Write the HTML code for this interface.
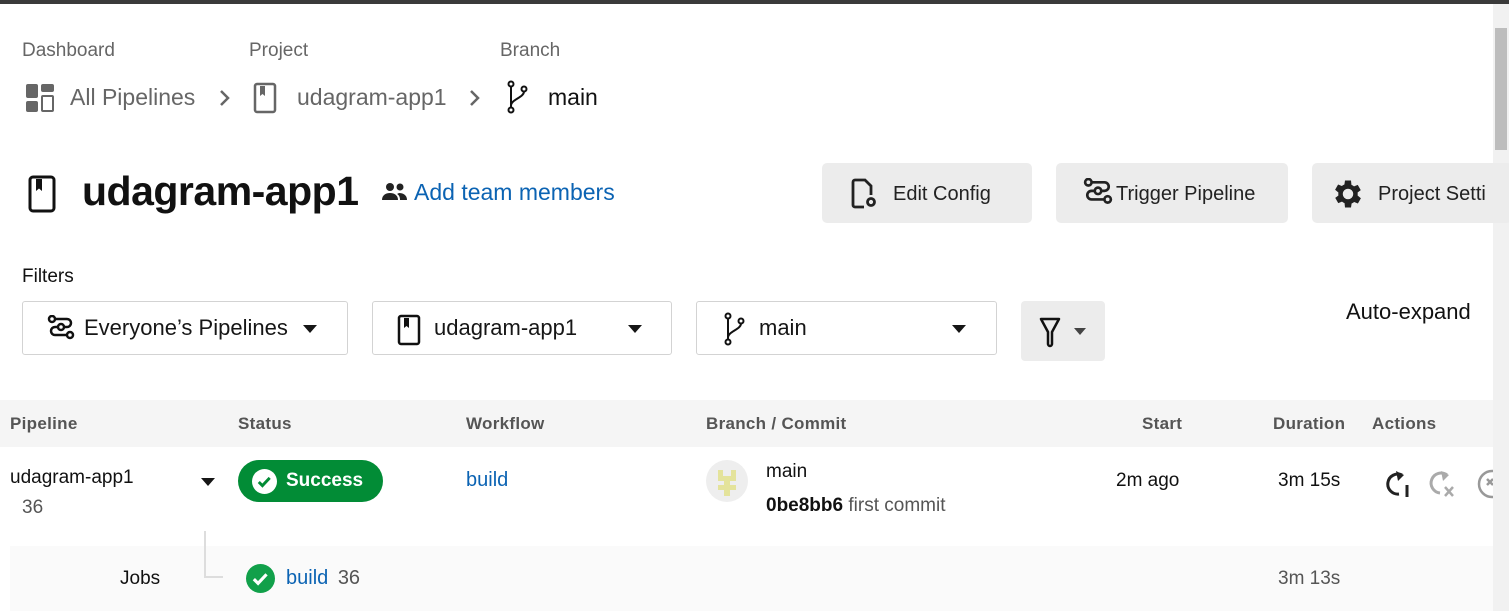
<!DOCTYPE html>
<html><head><style>
*{margin:0;padding:0;box-sizing:border-box}
body{width:1509px;height:611px;overflow:hidden;background:#fff;font-family:"Liberation Sans",sans-serif;color:#161616;position:relative}
.a{position:absolute;white-space:nowrap}
.btn{position:absolute;top:163px;height:60px;background:#ececec;border-radius:5px;font-size:20px;color:#222}
.sel{position:absolute;top:301px;height:54px;border:1px solid #d3d3d3;border-radius:3px;font-size:22px}
.tri{position:absolute;width:0;height:0;border-left:7px solid transparent;border-right:7px solid transparent;border-top:8px solid #161616}
.th{position:absolute;top:414px;font-size:17px;font-weight:bold;color:#555;letter-spacing:.3px}
</style></head><body>
<div class="a" style="left:0;top:0;width:1509px;height:4px;background:#3a3a3a"></div>
<div class="a" style="left:1493px;top:4px;width:16px;height:607px;background:#f1f1f1"></div>
<div class="a" style="left:1495px;top:28px;width:12px;height:122px;background:#bdbdbd"></div>

<div class="a" style="left:22px;top:40px;font-size:19px;color:#666">Dashboard</div>
<div class="a" style="left:249px;top:40px;font-size:19px;color:#666">Project</div>
<div class="a" style="left:500px;top:40px;font-size:19px;color:#666">Branch</div>

<svg class="a" style="left:26px;top:84px" width="28" height="28" viewBox="0 0 28 28"><rect x="0" y="0" width="12" height="14" rx="2" fill="#666"/><rect x="15" y="0" width="13" height="8" rx="2" fill="#666"/><rect x="0" y="17" width="12" height="11" rx="2" fill="#666"/><rect x="16" y="12" width="11" height="15" rx="1" fill="none" stroke="#666" stroke-width="2"/></svg>
<div class="a" style="left:70px;top:84px;font-size:23px;color:#666">All Pipelines</div>
<svg class="a" style="left:218px;top:88px" width="14" height="20" viewBox="0 0 14 20"><path d="M3 3l7 7-7 7" fill="none" stroke="#666" stroke-width="2.5"/></svg>
<svg class="a" style="left:253px;top:82px" width="26" height="32" viewBox="0 0 26 32"><rect x="2" y="2" width="20" height="28" rx="2" fill="none" stroke="#666" stroke-width="2.5"/><path d="M7 4v10l2.5-2 2.5 2V4z" fill="#666"/></svg>
<div class="a" style="left:297px;top:84px;font-size:23px;color:#666">udagram-app1</div>
<svg class="a" style="left:468px;top:88px" width="14" height="20" viewBox="0 0 14 20"><path d="M3 3l7 7-7 7" fill="none" stroke="#666" stroke-width="2.5"/></svg>
<svg class="a" style="left:506px;top:80px" width="24" height="34" viewBox="0 0 24 34"><circle cx="5" cy="4" r="2.5" fill="none" stroke="#111" stroke-width="2"/><circle cx="18" cy="9" r="2.5" fill="none" stroke="#111" stroke-width="2"/><circle cx="5" cy="30" r="2.5" fill="none" stroke="#111" stroke-width="2"/><path d="M5 6.5v21M18 11.5c0 6-13 8-13 14" fill="none" stroke="#111" stroke-width="2"/></svg>
<div class="a" style="left:548px;top:84px;font-size:23px;color:#111">main</div>

<svg class="a" style="left:28px;top:175px" width="30" height="38" viewBox="0 0 30 38"><rect x="2" y="2" width="24" height="34" rx="3" fill="none" stroke="#111" stroke-width="3"/><path d="M8 4v12l3-2.5 3 2.5V4z" fill="#111"/></svg>
<div class="a" style="left:82px;top:168px;font-size:41px;font-weight:bold;color:#111;letter-spacing:-.5px">udagram-app1</div>
<svg class="a" style="left:382px;top:182px" width="26" height="20" viewBox="0 0 26 20"><circle cx="8" cy="5" r="4" fill="#222"/><circle cx="18" cy="5" r="3.5" fill="#222"/><path d="M0 18c0-5 4-7 8-7s8 2 8 7zM17 11c4 0 8 2 8 7h-7c0-3-1-5-3-6z" fill="#222"/></svg>
<div class="a" style="left:414px;top:179px;font-size:23px;color:#0b63b3">Add team members</div>

<div class="btn" style="left:822px;width:210px"><svg class="a" style="left:28px;top:15px" width="28" height="32" viewBox="0 0 28 32"><path d="M14 29H5a2 2 0 01-2-2V4a2 2 0 012-2h10l6 6v9" fill="none" stroke="#222" stroke-width="2.8"/><circle cx="21" cy="24" r="3.5" fill="none" stroke="#222" stroke-width="2.8"/></svg><span class="a" style="left:71px;top:20px">Edit Config</span></div>
<div class="btn" style="left:1056px;width:232px"><svg class="a" style="left:27px;top:15px" width="30" height="30" viewBox="0 0 28 28"><path d="M6 4h14a4 4 0 010 8H8a4 4 0 000 8h14" fill="none" stroke="#222" stroke-width="2.5"/><circle cx="5" cy="4" r="3" fill="#ececec" stroke="#222" stroke-width="2.5"/><circle cx="14" cy="12" r="3" fill="#ececec" stroke="#222" stroke-width="2.5"/><circle cx="23" cy="20" r="3" fill="#ececec" stroke="#222" stroke-width="2.5"/></svg><span class="a" style="left:60px;top:20px">Trigger Pipeline</span></div>
<div class="btn" style="left:1312px;width:200px"><svg class="a" style="left:18px;top:13px" width="36" height="36" viewBox="0 0 24 24"><path fill="#222" d="M19.4 13a7.5 7.5 0 000-2l2.1-1.6-2-3.5-2.5 1a7 7 0 00-1.7-1L15 3h-4l-.4 2.7a7 7 0 00-1.7 1l-2.5-1-2 3.5L6.6 11a7.5 7.5 0 000 2l-2.1 1.6 2 3.5 2.5-1a7 7 0 001.7 1L11 21h4l.4-2.7a7 7 0 001.7-1l2.5 1 2-3.5zM13 15.5a3.5 3.5 0 110-7 3.5 3.5 0 010 7z" transform="translate(-1 0)"/></svg><span class="a" style="left:66px;top:20px">Project Setti</span></div>

<div class="a" style="left:22px;top:266px;font-size:19px;color:#111">Filters</div>
<div class="sel" style="left:22px;width:326px"><svg class="a" style="left:24px;top:13px" width="28" height="28" viewBox="0 0 28 28"><path d="M6 4h14a4 4 0 010 8H8a4 4 0 000 8h14" fill="none" stroke="#111" stroke-width="2.5"/><circle cx="5" cy="4" r="3" fill="#fff" stroke="#111" stroke-width="2.5"/><circle cx="14" cy="12" r="3" fill="#fff" stroke="#111" stroke-width="2.5"/><circle cx="23" cy="20" r="3" fill="#fff" stroke="#111" stroke-width="2.5"/></svg><span class="a" style="left:61px;top:13px">Everyone’s Pipelines</span><div class="tri" style="left:280px;top:23px"></div></div>
<div class="sel" style="left:372px;width:300px"><svg class="a" style="left:24px;top:12px" width="26" height="32" viewBox="0 0 26 32"><rect x="2" y="2" width="20" height="28" rx="2" fill="none" stroke="#111" stroke-width="2.5"/><path d="M7 4v10l2.5-2 2.5 2V4z" fill="#111"/></svg><span class="a" style="left:61px;top:13px">udagram-app1</span><div class="tri" style="left:255px;top:23px"></div></div>
<div class="sel" style="left:696px;width:301px"><svg class="a" style="left:26px;top:10px" width="24" height="34" viewBox="0 0 24 34"><circle cx="5" cy="4" r="2.5" fill="none" stroke="#111" stroke-width="2"/><circle cx="18" cy="9" r="2.5" fill="none" stroke="#111" stroke-width="2"/><circle cx="5" cy="30" r="2.5" fill="none" stroke="#111" stroke-width="2"/><path d="M5 6.5v21M18 11.5c0 6-13 8-13 14" fill="none" stroke="#111" stroke-width="2"/></svg><span class="a" style="left:62px;top:13px">main</span><div class="tri" style="left:255px;top:23px"></div></div>
<div class="a" style="left:1021px;top:301px;width:84px;height:60px;background:#ececec;border-radius:4px"><svg class="a" style="left:17px;top:15px" width="24" height="32" viewBox="0 0 24 32"><path d="M3 3h18l-7 13v12a2 2 0 01-4 0V16z" fill="none" stroke="#111" stroke-width="2.5" stroke-linejoin="round"/></svg><div class="tri" style="left:53px;top:27px;border-left-width:6px;border-right-width:6px;border-top-width:7px;border-top-color:#444"></div></div>
<div class="a" style="left:1346px;top:299px;font-size:22px;color:#111">Auto-expand</div>

<div class="a" style="left:0;top:400px;width:1493px;height:47px;background:#f5f5f5"></div>
<div class="th" style="left:10px">Pipeline</div>
<div class="th" style="left:238px">Status</div>
<div class="th" style="left:466px">Workflow</div>
<div class="th" style="left:706px">Branch / Commit</div>
<div class="th" style="left:1142px">Start</div>
<div class="th" style="left:1273px">Duration</div>
<div class="th" style="left:1372px">Actions</div>

<div class="a" style="left:10px;top:467px;font-size:19px;color:#111">udagram-app1</div>
<div class="a" style="left:22px;top:497px;font-size:19px;color:#555">36</div>
<div class="tri" style="left:201px;top:478px"></div>
<div class="a" style="left:238px;top:460px;width:145px;height:42px;background:#028c36;border-radius:21px"><svg class="a" style="left:14px;top:9px" width="25" height="25" viewBox="0 0 24 24"><circle cx="12" cy="12" r="12" fill="#fff"/><path d="M6.5 12.5l3.5 3.5 7-7.5" fill="none" stroke="#028c36" stroke-width="2.8"/></svg><span class="a" style="left:48px;top:10px;font-size:19px;font-weight:bold;color:#fff">Success</span></div>
<div class="a" style="left:466px;top:469px;font-size:20px;color:#0b63b3">build</div>
<svg class="a" style="left:706px;top:460px" width="42" height="42" viewBox="0 0 42 42"><circle cx="21" cy="21" r="21" fill="#eeeeee"/><path d="M12 10h5v6h8v-6h5v11h-6v4h6v5h-6v6h-6v-6h-6v-5h6v-4h-6z" fill="#e4e39b"/></svg>
<div class="a" style="left:766px;top:461px;font-size:19px;color:#111">main</div>
<div class="a" style="left:766px;top:495px;font-size:19px;color:#111;font-weight:bold">0be8bb6 <span style="font-weight:normal;color:#555">first commit</span></div>
<div class="a" style="left:1116px;top:470px;font-size:19px;color:#111">2m ago</div>
<div class="a" style="left:1278px;top:470px;font-size:19px;color:#111">3m 15s</div>
<svg class="a" style="left:1383px;top:469px" width="30" height="30" viewBox="0 0 30 30"><path d="M19 6A10 10 0 1016 25" fill="none" stroke="#222" stroke-width="3"/><path d="M13 2l8 4-6 6z" fill="#222"/><path d="M24 16v12" stroke="#222" stroke-width="3"/></svg>
<svg class="a" style="left:1428px;top:469px" width="30" height="30" viewBox="0 0 30 30"><path d="M19 6A10 10 0 1012 24" fill="none" stroke="#aaa" stroke-width="3"/><path d="M13 2l8 4-6 6z" fill="#aaa"/><path d="M17 18l8 9M25 18l-8 9" stroke="#aaa" stroke-width="2.5"/></svg>
<svg class="a" style="left:1476px;top:468px" width="17" height="32" viewBox="0 0 17 32"><circle cx="16" cy="16" r="13" fill="none" stroke="#999" stroke-width="2.5"/><path d="M11 11l6 6M17 11l-6 6" stroke="#999" stroke-width="2.5"/></svg>

<div class="a" style="left:10px;top:546px;width:1483px;height:65px;background:#fafafa"></div>
<div class="a" style="left:204px;top:531px;width:19px;height:47px;border-left:2px solid #ddd;border-bottom:2px solid #ddd"></div>
<div class="a" style="left:120px;top:568px;font-size:19px;color:#111">Jobs</div>
<svg class="a" style="left:246px;top:564px" width="29" height="29" viewBox="0 0 24 24"><circle cx="12" cy="12" r="12" fill="#11a04a"/><path d="M6.5 12.5l3.5 3.5 7-7.5" fill="none" stroke="#fff" stroke-width="2.6"/></svg>
<div class="a" style="left:286px;top:567px;font-size:20px;color:#0b63b3">build <span style="color:#555;margin-left:4px">36</span></div>
<div class="a" style="left:1278px;top:568px;font-size:19px;color:#555">3m 13s</div>
</body></html>
